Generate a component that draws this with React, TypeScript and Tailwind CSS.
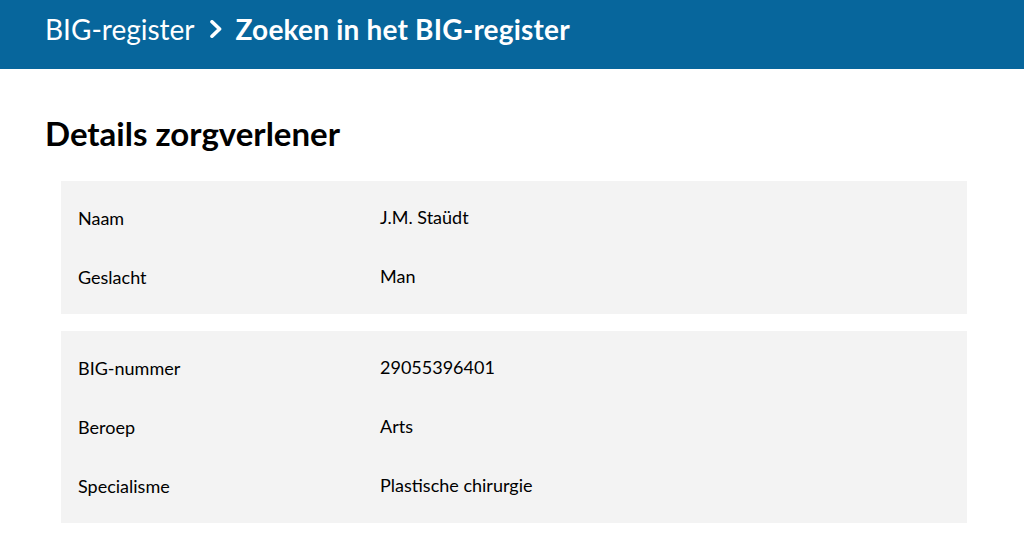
import React from 'react';

interface Row {
  label: string;
  value: string;
}

const personal: Row[] = [
  { label: 'Naam', value: 'J.M. Staüdt' },
  { label: 'Geslacht', value: 'Man' },
];

const registration: Row[] = [
  { label: 'BIG-nummer', value: '29055396401' },
  { label: 'Beroep', value: 'Arts' },
  { label: 'Specialisme', value: 'Plastische chirurgie' },
];

function DetailCard({ rows }: { rows: Row[] }) {
  return (
    <dl className="bg-[#f3f3f3] px-[17px] py-[7.5px]">
      {rows.map((row) => (
        <div key={row.label} className="flex h-[59px] items-center">
          <dt className="w-[302px] shrink-0">{row.label}</dt>
          <dd className="-mt-[2px]">{row.value}</dd>
        </div>
      ))}
    </dl>
  );
}

export default function App() {
  return (
    <div className="min-h-[552px] bg-white text-[#000] font-['Lato',sans-serif]">
      {/* Header */}
      <header className="h-[69px] bg-[#07669c] flex items-center px-[45px] text-white text-[28px] pb-[12px]">
        <span>BIG-register</span>
        <svg className="ml-[14px] mr-[13px] w-[14px] h-[18px]" viewBox="0 0 14 18" fill="none">
          <path d="M3 1.8 L10.6 9 L3 16.2" stroke="white" strokeWidth={3.6} strokeLinecap="round" strokeLinejoin="round" />
        </svg>
        <span className="font-bold tracking-[0.2px]">Zoeken in het BIG-register</span>
      </header>

      <main className="px-[45px]">
        <h1 className="text-[33px] font-bold mt-[44px] mb-[28px] leading-[40px]">Details zorgverlener</h1>
        <div className="ml-[16px] mr-[12px] flex flex-col gap-[17px] text-[18px]">
          <DetailCard rows={personal} />
          <DetailCard rows={registration} />
        </div>
      </main>
    </div>
  );
}
